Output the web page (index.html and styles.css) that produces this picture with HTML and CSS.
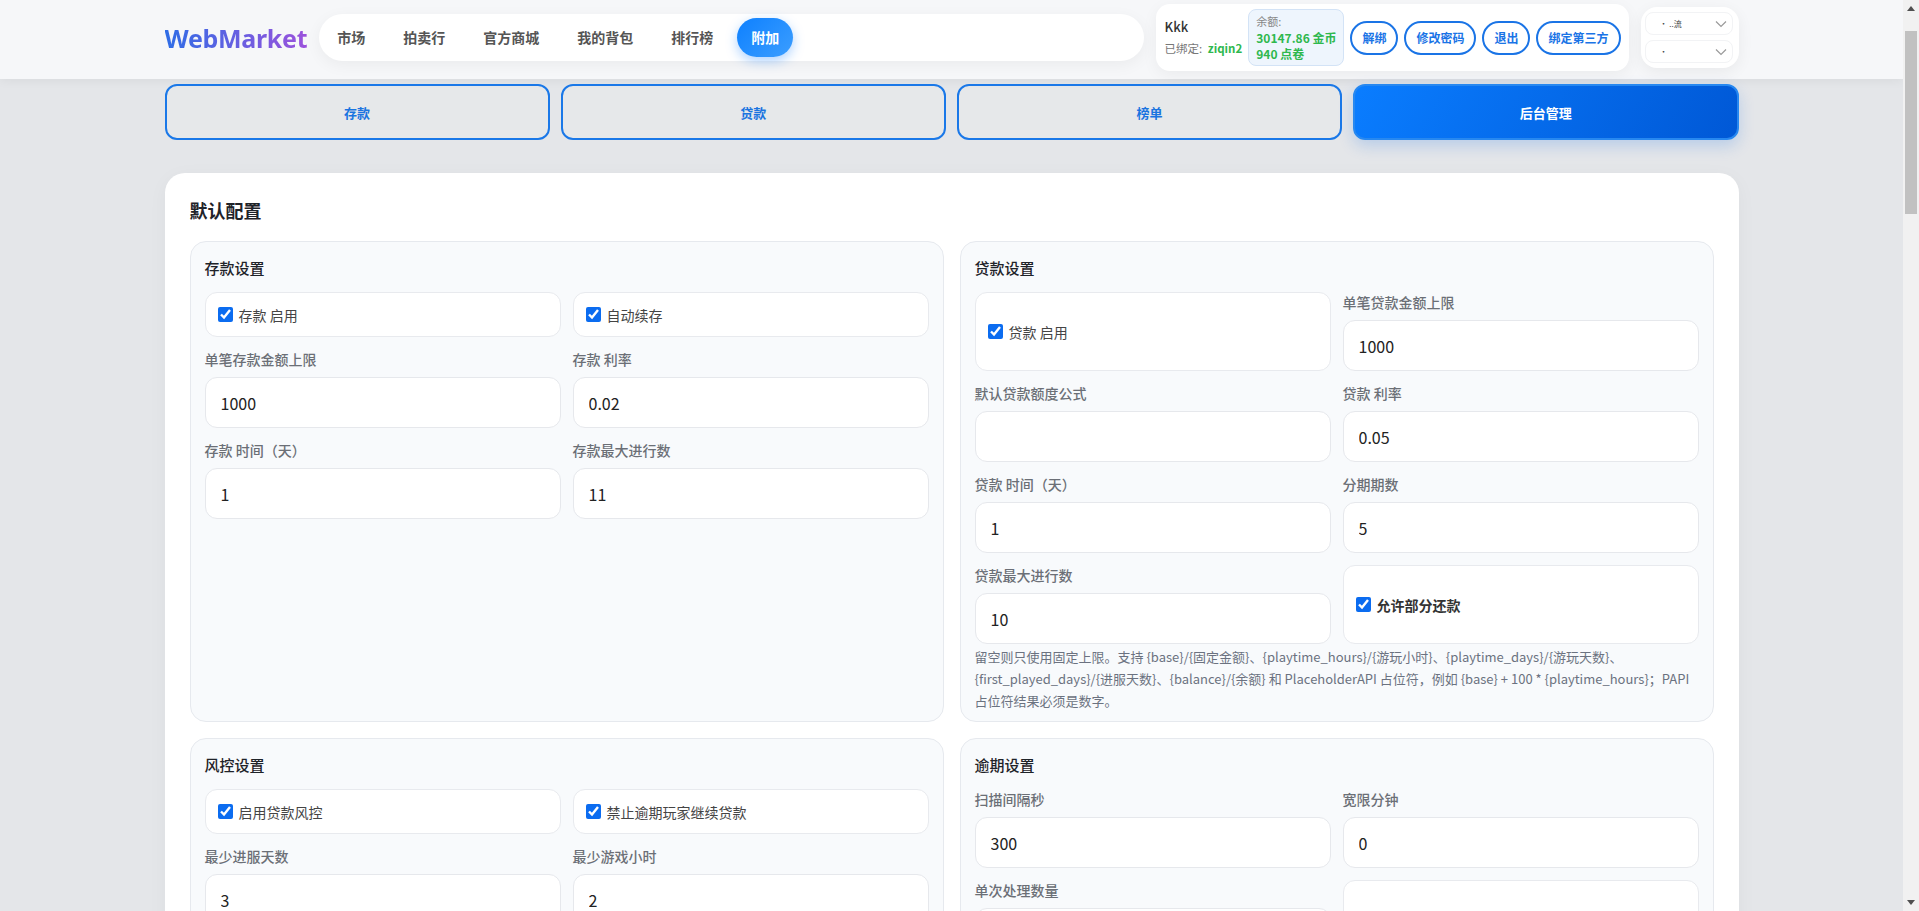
FILE: index.html
```html
<!DOCTYPE html>
<html lang="zh-CN">
<head>
  <meta charset="UTF-8" />
  <meta name="viewport" content="width=device-width, initial-scale=1.0"/>
  <title>WebMarket - 附加</title>
  <link rel="stylesheet" href="styles.css">
</head>
<body>

  <div class="topbar">
    <div class="topbar-inner">
      <div class="logo">WebMarket</div>

      <nav class="nav">
        <a href="#">市场</a>
        <a href="#">拍卖行</a>
        <a href="#">官方商城</a>
        <a href="#">我的背包</a>
        <a href="#">排行榜</a>
        <a href="#" class="active">附加</a>
      </nav>

      <div class="user-box">
        <div class="user-info">
          <div class="user-name">Kkk</div>
          <div class="user-bind">已绑定: <span class="green">ziqin2</span></div>
        </div>
        <div class="balance">
          <div class="balance-title">余额:</div>
          <div class="balance-val">30147.86 金币</div>
          <div class="balance-val">940 点卷</div>
        </div>
        <div class="user-actions">
          <button class="pill-btn">解绑</button>
          <button class="pill-btn">修改密码</button>
          <button class="pill-btn">退出</button>
          <button class="pill-btn">绑定第三方</button>
        </div>
      </div>

      <div class="select-box">
        <div class="fake-select">
          <span class="sel-text">· ..流</span>
          <svg width="12" height="8" viewBox="0 0 12 8"><polyline points="1,1.5 6,6.5 11,1.5" fill="none" stroke="#9a9a9a" stroke-width="1.2"/></svg>
        </div>
        <div class="fake-select">
          <span class="sel-text">·</span>
          <svg width="12" height="8" viewBox="0 0 12 8"><polyline points="1,1.5 6,6.5 11,1.5" fill="none" stroke="#9a9a9a" stroke-width="1.2"/></svg>
        </div>
      </div>
    </div>
  </div>

  <div class="wrap">
    <div class="tabs">
      <button class="tab">存款</button>
      <button class="tab">贷款</button>
      <button class="tab">榜单</button>
      <button class="tab active">后台管理</button>
    </div>

    <div class="panel">
      <h2 class="panel-title">默认配置</h2>

      <div class="section-grid">
        <!-- 存款 -->
        <div class="section">
          <h3>存款设置</h3>
          <div class="field-grid">
            <label class="check-box"><input type="checkbox" checked> 存款 启用</label>
            <label class="check-box"><input type="checkbox" checked> 自动续存</label>
            <div class="field">
              <label>单笔存款金额上限</label>
              <input type="text" value="1000">
            </div>
            <div class="field">
              <label>存款 利率</label>
              <input type="text" value="0.02">
            </div>
            <div class="field">
              <label>存款 时间（天）</label>
              <input type="text" value="1">
            </div>
            <div class="field">
              <label>存款最大进行数</label>
              <input type="text" value="11">
            </div>
          </div>
        </div>

        <!-- 贷款 -->
        <div class="section">
          <h3>贷款设置</h3>
          <div class="field-grid">
            <label class="check-box"><input type="checkbox" checked> 贷款 启用</label>
            <div class="field">
              <label>单笔贷款金额上限</label>
              <input type="text" value="1000">
            </div>
            <div class="field">
              <label>默认贷款额度公式</label>
              <input type="text" value="">
            </div>
            <div class="field">
              <label>贷款 利率</label>
              <input type="text" value="0.05">
            </div>
            <div class="field">
              <label>贷款 时间（天）</label>
              <input type="text" value="1">
            </div>
            <div class="field">
              <label>分期期数</label>
              <input type="text" value="5">
            </div>
            <div class="field">
              <label>贷款最大进行数</label>
              <input type="text" value="10">
            </div>
            <label class="check-box strong"><input type="checkbox" checked> 允许部分还款</label>
          </div>
          <p class="help">留空则只使用固定上限。支持 {base}/{固定金额}、{playtime_hours}/{游玩小时}、{playtime_days}/{游玩天数}、{first_played_days}/{进服天数}、{balance}/{余额} 和 PlaceholderAPI 占位符，例如 {base} + 100 * {playtime_hours}；PAPI 占位符结果必须是数字。</p>
        </div>

        <!-- 风控 -->
        <div class="section">
          <h3>风控设置</h3>
          <div class="field-grid">
            <label class="check-box"><input type="checkbox" checked> 启用贷款风控</label>
            <label class="check-box"><input type="checkbox" checked> 禁止逾期玩家继续贷款</label>
            <div class="field">
              <label>最少进服天数</label>
              <input type="text" value="3">
            </div>
            <div class="field">
              <label>最少游戏小时</label>
              <input type="text" value="2">
            </div>
          </div>
        </div>

        <!-- 逾期 -->
        <div class="section">
          <h3>逾期设置</h3>
          <div class="field-grid">
            <div class="field">
              <label>扫描间隔秒</label>
              <input type="text" value="300">
            </div>
            <div class="field">
              <label>宽限分钟</label>
              <input type="text" value="0">
            </div>
            <div class="field">
              <label>单次处理数量</label>
              <input type="text" value="50">
            </div>
            <label class="check-box"><input type="checkbox" checked> 逾期自动扣款</label>
          </div>
        </div>
      </div>
    </div>
  </div>

  <!-- 模拟滚动条 -->
  <div class="fake-scrollbar">
    <span class="sb-arrow up"></span>
    <span class="sb-thumb"></span>
    <span class="sb-arrow down"></span>
  </div>

</body>
</html>
```

FILE: styles.css
```css
* {
  box-sizing: border-box;
  margin: 0;
  padding: 0;
}

html {
  overflow: hidden;
}

body {
  font-family: "Noto Sans CJK SC", "Noto Sans", sans-serif;
  background: #e4e6e9;
  color: #222;
  min-height: 100vh;
  padding-right: 16px;
}

button {
  font-family: inherit;
  cursor: pointer;
}

/* 顶部栏 */
.topbar {
  background: #f6f7f9;
  box-shadow: 0 2px 10px rgba(0, 0, 0, 0.05);
  padding: 4px 0 8px;
}

.topbar-inner {
  max-width: 1574px;
  margin: 0 auto;
  display: flex;
  align-items: center;
  gap: 12px;
}

.logo {
  font-family: "Noto Sans", sans-serif;
  font-size: 25px;
  font-weight: 700;
  letter-spacing: -0.3px;
  background: linear-gradient(90deg, #2f6de6, #9b52dc);
  -webkit-background-clip: text;
  background-clip: text;
  color: transparent;
}

.nav {
  flex: 1;
  display: flex;
  align-items: center;
  gap: 10px;
  padding: 4px;
  background: #fff;
  border-radius: 24px;
  box-shadow: 0 4px 16px rgba(0, 0, 0, 0.05);
}

.nav a {
  height: 39px;
  line-height: 39px;
  padding: 0 14px;
  border-radius: 20px;
  font-size: 14px;
  font-weight: 600;
  color: #555;
  text-decoration: none;
}

.nav a.active {
  color: #fff;
  background: linear-gradient(135deg, #0d80ff, #3c9eff);
  box-shadow: 0 4px 12px rgba(20, 125, 255, 0.35);
}

.user-box {
  display: flex;
  align-items: center;
  gap: 6px;
  padding: 5px 8px 5px 9px;
  background: #fff;
  border-radius: 14px;
  box-shadow: 0 4px 16px rgba(0, 0, 0, 0.05);
}

.user-info {
  display: flex;
  flex-direction: column;
  gap: 5px;
}

.user-name {
  font-size: 13px;
  line-height: 17px;
  font-weight: 500;
  color: #333;
}

.user-bind {
  font-size: 11.5px;
  line-height: 17px;
  color: #777;
}

.green {
  color: #2fb84e;
  font-weight: 700;
  margin-left: 3px;
}

.balance {
  padding: 3px 7px;
  background: #eef5fd;
  border: 1px solid #d3e3f6;
  border-radius: 8px;
}

.balance-title {
  font-size: 11px;
  line-height: 16px;
  color: #888;
  margin-bottom: 1px;
}

.balance-val {
  font-size: 12px;
  line-height: 16px;
  font-weight: 700;
  color: #2fb84e;
}

.user-actions {
  display: flex;
  gap: 6px;
}

.pill-btn {
  height: 34px;
  padding: 0 10px;
  border: 2px solid #1a74e6;
  border-radius: 17px;
  background: #fff;
  color: #1a74e6;
  font-size: 12px;
  font-weight: 700;
}

.select-box {
  display: flex;
  flex-direction: column;
  gap: 5px;
  padding: 5px 6px 5px 4px;
  background: #fff;
  border-radius: 16px;
  box-shadow: 0 4px 16px rgba(0, 0, 0, 0.06);
}

.fake-select {
  width: 88px;
  height: 23px;
  display: flex;
  align-items: center;
  justify-content: space-between;
  padding: 0 5px 0 14px;
  border: 1px solid #f2f3f5;
  border-radius: 8px;
  background: #fff;
}

.sel-text {
  font-size: 8px;
  color: #444;
}

/* 主体 */
.wrap {
  max-width: 1574px;
  margin: 5px auto 0;
}

.tabs {
  display: grid;
  grid-template-columns: repeat(4, 1fr);
  gap: 11px;
}

.tab {
  height: 56px;
  border: 2px solid #1a78e8;
  border-radius: 12px;
  background: rgba(255, 255, 255, 0.08);
  color: #1a74e0;
  font-size: 13px;
  font-weight: 700;
}

.tab.active {
  color: #fff;
  border-color: #2788f0;
  background: linear-gradient(120deg, #0a7dff, #0058d6);
  box-shadow: 0 6px 16px rgba(0, 100, 230, 0.2);
}

.panel {
  margin-top: 33px;
  padding: 24px 25px;
  background: #fff;
  border-radius: 20px;
  box-shadow: 0 4px 20px rgba(0, 0, 0, 0.04);
}

.panel-title {
  font-size: 18px;
  line-height: 26px;
  font-weight: 700;
  color: #1f2329;
  margin-bottom: 18px;
}

.section-grid {
  display: grid;
  grid-template-columns: 1fr 1fr;
  gap: 16px;
}

.section {
  padding: 15px 14px 9px;
  background: #f8fafc;
  border: 1px solid #e6e9ee;
  border-radius: 16px;
}

.section h3 {
  font-size: 15px;
  line-height: 22px;
  font-weight: 500;
  color: #1f2329;
  margin-bottom: 13px;
}

.field-grid {
  display: grid;
  grid-template-columns: 1fr 1fr;
  gap: 12px;
}

.check-box {
  display: flex;
  align-items: center;
  gap: 6px;
  min-height: 45px;
  padding: 0 12px;
  background: #fff;
  border: 1px solid #e8eaee;
  border-radius: 12px;
  font-size: 14px;
  color: #444;
}

.check-box input {
  width: 15px;
  height: 15px;
  margin: 0;
  accent-color: #0b6cf0;
}

.check-box.strong {
  font-weight: 700;
  color: #333;
}

.field {
  display: flex;
  flex-direction: column;
  gap: 8px;
}

.field label {
  font-size: 14px;
  line-height: 20px;
  font-weight: 500;
  color: #6b6f76;
}

.field input {
  width: 100%;
  height: 51px;
  padding: 0 15px;
  background: #fff;
  border: 1px solid #e6e8ec;
  border-radius: 12px;
  font-family: inherit;
  font-size: 16px;
  color: #222;
  outline: none;
}

.help {
  margin-top: 2px;
  font-size: 13px;
  line-height: 22px;
  color: #6b7280;
}

/* 滚动条 */
.fake-scrollbar {
  position: fixed;
  top: 0;
  right: 0;
  width: 16px;
  height: 100vh;
  background: #f1f1f1;
  z-index: 20;
}

.sb-thumb {
  position: absolute;
  top: 31px;
  left: 2px;
  width: 12px;
  height: 183px;
  background: #c1c1c1;
}

.sb-arrow {
  position: absolute;
  left: 4px;
  width: 0;
  height: 0;
  border-left: 4px solid transparent;
  border-right: 4px solid transparent;
}

.sb-arrow.up {
  top: 6px;
  border-bottom: 5px solid #505050;
}

.sb-arrow.down {
  bottom: 6px;
  border-top: 5px solid #505050;
}
```
